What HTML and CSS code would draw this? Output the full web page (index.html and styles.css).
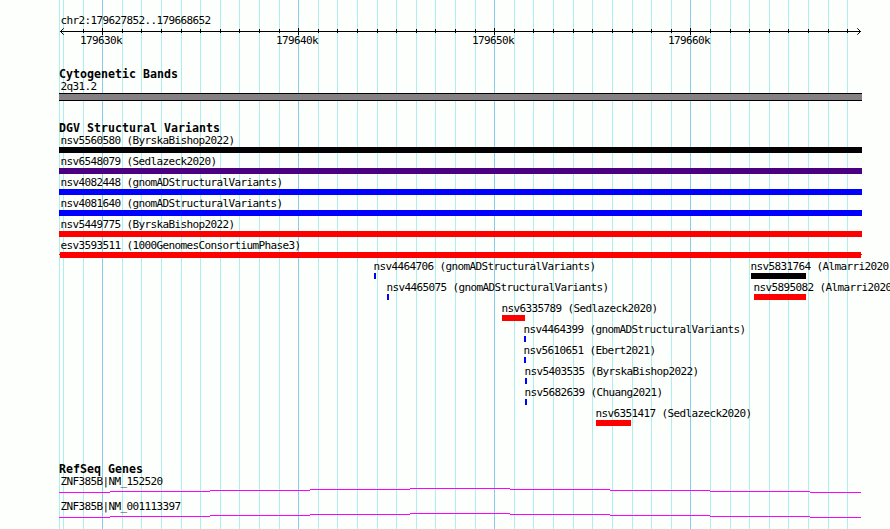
FILE: index.html
```
<!DOCTYPE html>
<html lang="en">
<head>
    <meta charset="UTF-8">
    <meta name="viewport" content="width=device-width, initial-scale=1.0">
    <title>chr2:179627852..179668652</title>
    <link rel="stylesheet" href="styles.css">
</head>
<body>
    <div class="browser">
        <svg class="gridlines" width="890" height="529" shape-rendering="crispEdges">
            <path class="minor" d="M59.5 0v529M63.5 0v529M83.5 0v529M122.5 0v529M141.5 0v529M161.5 0v529M181.5 0v529M200.5 0v529M220.5 0v529M239.5 0v529M259.5 0v529M279.5 0v529M318.5 0v529M337.5 0v529M357.5 0v529M377.5 0v529M396.5 0v529M416.5 0v529M435.5 0v529M455.5 0v529M475.5 0v529M514.5 0v529M533.5 0v529M553.5 0v529M573.5 0v529M592.5 0v529M612.5 0v529M632.5 0v529M651.5 0v529M671.5 0v529M710.5 0v529M730.5 0v529M749.5 0v529M769.5 0v529M788.5 0v529M808.5 0v529M828.5 0v529M847.5 0v529"/>
            <path class="major" d="M102.5 0v529M298.5 0v529M494.5 0v529M690.5 0v529"/>
        </svg>

        <div class="ruler">
            <div class="label">chr2:179627852..179668652</div>
            <svg class="axis" width="803" height="8" viewBox="59 27 803 8">
                <path d="M60 31.5H861" shape-rendering="crispEdges"/>
                <path d="M83.5 29v4M122.5 29v4M141.5 29v4M161.5 29v4M181.5 29v4M200.5 29v4M220.5 29v4M239.5 29v4M259.5 29v4M279.5 29v4M318.5 29v4M337.5 29v4M357.5 29v4M377.5 29v4M396.5 29v4M416.5 29v4M435.5 29v4M455.5 29v4M475.5 29v4M514.5 29v4M533.5 29v4M553.5 29v4M573.5 29v4M592.5 29v4M612.5 29v4M632.5 29v4M651.5 29v4M671.5 29v4M710.5 29v4M730.5 29v4M749.5 29v4M769.5 29v4M788.5 29v4M808.5 29v4M828.5 29v4M847.5 29v4" shape-rendering="crispEdges"/>
                <path d="M102.5 28v7M298.5 28v7M494.5 28v7M690.5 28v7" shape-rendering="crispEdges"/>
                <path d="M63.7 28.3L60.5 31.5L63.7 34.7M857.3 28.3L860.5 31.5L857.3 34.7"/>
            </svg>
            <div class="ticks">
                <span>179630k</span>
                <span>179640k</span>
                <span>179650k</span>
                <span>179660k</span>
            </div>
        </div>

        <div class="track cyto">
            <h3>Cytogenetic Bands</h3>
            <div class="label">2q31.2</div>
            <div class="band"></div>
        </div>

        <div class="track variants">
            <h3>DGV Structural Variants</h3>
            <div class="feature full">
                <div class="label">nsv5560580 (ByrskaBishop2022)</div>
                <div class="bar black"></div>
            </div>
            <div class="feature full">
                <div class="label">nsv6548079 (Sedlazeck2020)</div>
                <div class="bar purple"></div>
            </div>
            <div class="feature full">
                <div class="label">nsv4082448 (gnomADStructuralVariants)</div>
                <div class="bar blue"></div>
            </div>
            <div class="feature full">
                <div class="label">nsv4081640 (gnomADStructuralVariants)</div>
                <div class="bar blue"></div>
            </div>
            <div class="feature full">
                <div class="label">nsv5449775 (ByrskaBishop2022)</div>
                <div class="bar red"></div>
            </div>
            <div class="feature full">
                <div class="label">esv3593511 (1000GenomesConsortiumPhase3)</div>
                <div class="bar range"></div>
            </div>
            <div class="row" style="--start: 315px">
                <div class="feature" style="--size: 2px; --next: 377px">
                    <div class="label">nsv4464706 (gnomADStructuralVariants)</div>
                    <div class="bar blue"></div>
                </div>
                <div class="feature" style="--size: 55px">
                    <div class="label">nsv5831764 (Almarri2020)</div>
                    <div class="bar black"></div>
                </div>
            </div>
            <div class="row" style="--start: 328px">
                <div class="feature" style="--size: 2px; --next: 367px">
                    <div class="label">nsv4465075 (gnomADStructuralVariants)</div>
                    <div class="bar blue"></div>
                </div>
                <div class="feature" style="--size: 52px">
                    <div class="label">nsv5895082 (Almarri2020)</div>
                    <div class="bar red"></div>
                </div>
            </div>
            <div class="row" style="--start: 443px">
                <div class="feature" style="--size: 23px">
                    <div class="label">nsv6335789 (Sedlazeck2020)</div>
                    <div class="bar red"></div>
                </div>
            </div>
            <div class="row" style="--start: 465px">
                <div class="feature" style="--size: 2px">
                    <div class="label">nsv4464399 (gnomADStructuralVariants)</div>
                    <div class="bar blue"></div>
                </div>
            </div>
            <div class="row" style="--start: 465px">
                <div class="feature" style="--size: 2px">
                    <div class="label">nsv5610651 (Ebert2021)</div>
                    <div class="bar blue"></div>
                </div>
            </div>
            <div class="row" style="--start: 466px">
                <div class="feature" style="--size: 2px">
                    <div class="label">nsv5403535 (ByrskaBishop2022)</div>
                    <div class="bar blue"></div>
                </div>
            </div>
            <div class="row" style="--start: 466px">
                <div class="feature" style="--size: 2px">
                    <div class="label">nsv5682639 (Chuang2021)</div>
                    <div class="bar blue"></div>
                </div>
            </div>
            <div class="row" style="--start: 537px">
                <div class="feature" style="--size: 35px">
                    <div class="label">nsv6351417 (Sedlazeck2020)</div>
                    <div class="bar red"></div>
                </div>
            </div>
        </div>

        <div class="track genes">
            <h3>RefSeq Genes</h3>
            <div class="gene">
                <div class="label">ZNF385B|NM_152520</div>
                <svg class="intron" width="802" height="5" shape-rendering="crispEdges">
                    <path d="M0 4.5H51M51 3.5H151M151 2.5H251M251 1.5H351M351 .5H451M451 1.5H551M551 2.5H651M651 3.5H751M751 4.5H802"/>
                </svg>
            </div>
            <div class="gene">
                <div class="label">ZNF385B|NM_001113397</div>
                <svg class="intron" width="802" height="5" shape-rendering="crispEdges">
                    <path d="M0 4.5H51M51 3.5H151M151 2.5H251M251 1.5H351M351 .5H451M451 1.5H551M551 2.5H651M651 3.5H751M751 4.5H802"/>
                </svg>
            </div>
        </div>
    </div>
</body>
</html>
```
FILE: styles.css
```
body {
    margin: 0;
    background-color: #fdfffc;
    color: #000;
    font-family: "DejaVu Sans Mono", monospace;
    overflow: hidden;
}
.browser {
    position: relative;
    box-sizing: border-box;
    width: 890px;
    height: 529px;
    padding: 15px 0 0 59px;
    overflow: hidden;
}
.gridlines {
    position: absolute;
    top: 0;
    left: 0;
    z-index: -1;
}
.minor {
    stroke: #afeeee;
}
.major {
    stroke: #87ceeb;
}
svg {
    display: block;
    fill: none;
}
.label,
.ticks {
    font-size: 11px;
    line-height: 12px;
    height: 12px;
    letter-spacing: -0.622px;
    white-space: nowrap;
}
.label {
    padding-left: 1.4px;
}
.axis {
    stroke: #000;
}
.ticks {
    display: grid;
    grid-template-columns: repeat(4, 196px);
    padding-left: 21px;
}
h3 {
    margin: 0;
    height: 13px;
    font-size: 11.6px;
    line-height: 13px;
    letter-spacing: 0.016px;
}
.cyto {
    margin-top: 21px;
}
.band {
    box-sizing: border-box;
    width: 803px;
    height: 8px;
    background-color: #848084;
    border: solid #000;
    border-width: 1px 0;
}
.variants {
    margin-top: 21px;
}
.row {
    display: flex;
    height: 21px;
    padding-left: var(--start);
}
.feature {
    flex: none;
    width: var(--size);
    height: 21px;
    margin-right: calc(var(--next, 0px) - var(--size));
}
.row .label {
    margin-left: -0.5px;
    padding-left: 0;
}
.full {
    width: 803px;
    margin-right: 0;
}
.bar {
    height: 6px;
}
.black {
    background-color: #030104;
}
.purple {
    background-color: #4b0082;
}
.blue {
    background-color: #0000ff;
}
.red {
    background-color: #ff0000;
}
/* one pixel of the centre line sticks out on each side */
.range {
    background: linear-gradient(#f00, #f00) 1px 0 / 801px 6px no-repeat,
        linear-gradient(#f00, #f00) 0 2px / 803px 1px no-repeat;
}
.genes {
    margin-top: 34px;
}
.gene {
    height: 25px;
}
.intron {
    stroke: #ff00ff;
}
```
